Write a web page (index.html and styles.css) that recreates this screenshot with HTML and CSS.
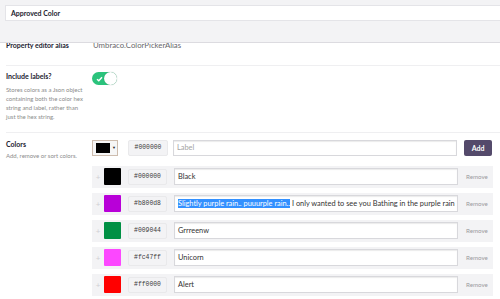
FILE: index.html
```html
<!DOCTYPE html>
<html>
	<head>
		<meta charset="utf-8" />
		<title>Approved Color</title>
		<link rel="stylesheet" href="styles.css">
	</head>
	<body>
		<div class="editor-header">
			<div class="name-input">Approved Color</div>
		</div>
		<div class="props">
			<div class="prop prop-alias">
				<div class="prop-label">
					<div class="label-title">Property editor alias</div>
				</div>
				<div class="prop-value alias-value">Umbraco.ColorPickerAlias</div>
			</div>
			<div class="prop prop-labels">
				<div class="prop-label">
					<div class="label-title">Include labels?</div>
					<div class="label-desc">Stores colors as a Json object containing both the color hex string and label, rather than just the hex string.</div>
				</div>
				<div class="prop-value">
					<span class="toggle">
						<svg class="toggle-check" width="7" height="6" viewBox="0 0 7 6"><path d="M1 3.2 L2.8 4.8 L6 1.2" fill="none" stroke="#fff" stroke-width="1.4"/></svg>
						<span class="toggle-knob"></span>
					</span>
				</div>
			</div>
			<div class="prop prop-colors">
				<div class="prop-label">
					<div class="label-title">Colors</div>
					<div class="label-desc">Add, remove or sort colors.</div>
				</div>
				<div class="prop-value">
					<div class="add-row">
						<span class="picker"><span class="picker-swatch"></span><span class="picker-caret">&#9660;</span></span>
						<span class="hex">#000000</span>
						<span class="text-input placeholder">Label</span>
						<span class="btn-add">Add</span>
					</div>
					<div class="color-list">
						<div class="color-row">
							<span class="handle">+</span>
							<span class="swatch" style="background:#000000"></span>
							<span class="hex">#000000</span>
							<span class="text-input">Black</span>
							<span class="remove">Remove</span>
						</div>
						<div class="color-row">
							<span class="handle">+</span>
							<span class="swatch" style="background:#b800d8"></span>
							<span class="hex">#b800d8</span>
							<span class="text-input"><span class="selected">Slightly purple rain.. puuurple rain..</span> I only wanted to see you Bathing in the purple rain</span>
							<span class="remove">Remove</span>
						</div>
						<div class="color-row">
							<span class="handle">+</span>
							<span class="swatch" style="background:#009044"></span>
							<span class="hex">#009044</span>
							<span class="text-input">Grrreenw</span>
							<span class="remove">Remove</span>
						</div>
						<div class="color-row">
							<span class="handle">+</span>
							<span class="swatch" style="background:#fc47ff"></span>
							<span class="hex">#fc47ff</span>
							<span class="text-input">Unicorn</span>
							<span class="remove">Remove</span>
						</div>
						<div class="color-row">
							<span class="handle">+</span>
							<span class="swatch" style="background:#ff0000"></span>
							<span class="hex">#ff0000</span>
							<span class="text-input">Alert</span>
							<span class="remove">Remove</span>
						</div>
					</div>
				</div>
			</div>
		</div>
	</body>
</html>
```

FILE: styles.css
```css
*{
	margin:0;
	padding:0;
	box-sizing:border-box;
}
body{
	background:#fff;
	font-family:Lato, "Open Sans", sans-serif;
	color:#1b264f;
	overflow:hidden;
}
.editor-header{
	position:fixed;
	top:0;
	left:0;
	right:0;
	height:43px;
	background:#f3f3f5;
	border-bottom:1px solid #dcdbe0;
	padding-top:5px;
	z-index:2;
}
.name-input{
	margin-left:5px;
	height:16px;
	background:#fff;
	border:1px solid #e4e4e8;
	border-right:none;
	padding-left:5px;
	font-size:7px;
	font-weight:bold;
	line-height:14px;
	color:#1b1b2f;
}
.props{
	padding-top:40px;
	padding-left:6px;
}
.prop{
	display:flex;
	border-bottom:1px solid #efeff1;
}
.prop-label{
	width:86px;
	flex-shrink:0;
}
.prop-value{
	flex:1;
}
.label-title{
	font-size:7px;
	font-weight:bold;
	line-height:10px;
	color:#1b1b2f;
}
.label-desc{
	font-size:6px;
	line-height:9px;
	color:#8c8c8c;
	margin-top:3.5px;
	width:80px;
}
.prop-alias{
	padding-bottom:15px;
}
.alias-value{
	font-size:7.8px;
	line-height:10px;
	color:#68676b;
	padding-left:1px;
}
.prop-labels{
	padding-top:5px;
	padding-bottom:11px;
}
.toggle{
	display:flex;
	align-items:center;
	margin-top:1px;
	width:25px;
	height:13px;
	border-radius:7px;
	background:#2bc37c;
	position:relative;
}
.toggle-check{
	margin-left:4px;
}
.toggle-knob{
	position:absolute;
	right:0;
	top:0;
	width:13px;
	height:13px;
	border-radius:50%;
	background:#fff;
	box-shadow:0 0 1px rgba(0,0,0,.35);
}
.prop-colors{
	padding-top:6px;
	border-bottom:none;
}
.prop-colors .label-desc{
	margin-top:2px;
	width:auto;
}
.add-row{
	display:flex;
	align-items:center;
	height:16px;
	margin-top:1px;
	padding-right:8px;
}
.picker{
	display:flex;
	align-items:center;
	width:26px;
	height:16px;
	border:1px solid #cdbcae;
	background:#f6f6f6;
	padding-left:3px;
}
.picker-swatch{
	width:14px;
	height:10px;
	background:#000;
}
.picker-caret{
	font-size:4px;
	margin-left:2px;
	color:#222;
}
.hex{
	display:flex;
	align-items:center;
	justify-content:center;
	width:40px;
	height:16px;
	margin-left:10px;
	background:#f3f3f5;
	border:1px solid #e9e9eb;
	border-radius:2px;
	font-family:"Liberation Mono", monospace;
	font-size:6.4px;
	color:#3a3a3a;
}
.text-input{
	flex:1;
	height:16px;
	margin-left:5px;
	background:#fff;
	border:1px solid #d8d8dc;
	box-shadow:inset 0 1px 1px rgba(0,0,0,.08);
	padding-left:3px;
	font-size:7.4px;
	line-height:14px;
	color:#333;
	white-space:nowrap;
	overflow:hidden;
}
.placeholder{
	color:#a3a3a3;
}
.selected{
	background:#3390ff;
	color:#fff;
}
.btn-add{
	width:28px;
	height:16px;
	margin-left:7px;
	background:#544a6b;
	border-radius:2px;
	color:#fff;
	font-size:7px;
	font-weight:bold;
	line-height:16px;
	text-align:center;
}
.color-list{
	display:flex;
	flex-direction:column;
	gap:5px;
	margin-top:10px;
	width:401px;
}
.color-row{
	display:flex;
	align-items:center;
	height:22px;
	background:#f3f3f5;
}
.color-row .hex{
	width:39px;
	margin-left:7px;
}
.color-row .text-input{
	margin-left:7px;
	height:17px;
	line-height:15px;
}
.handle{
	width:12px;
	text-align:center;
	font-size:8px;
	color:#d0d0d4;
}
.swatch{
	width:17px;
	height:17px;
	border-radius:1px;
}
.remove{
	width:35px;
	padding-left:8px;
	font-size:6.2px;
	color:#9a9a9e;
}
```
